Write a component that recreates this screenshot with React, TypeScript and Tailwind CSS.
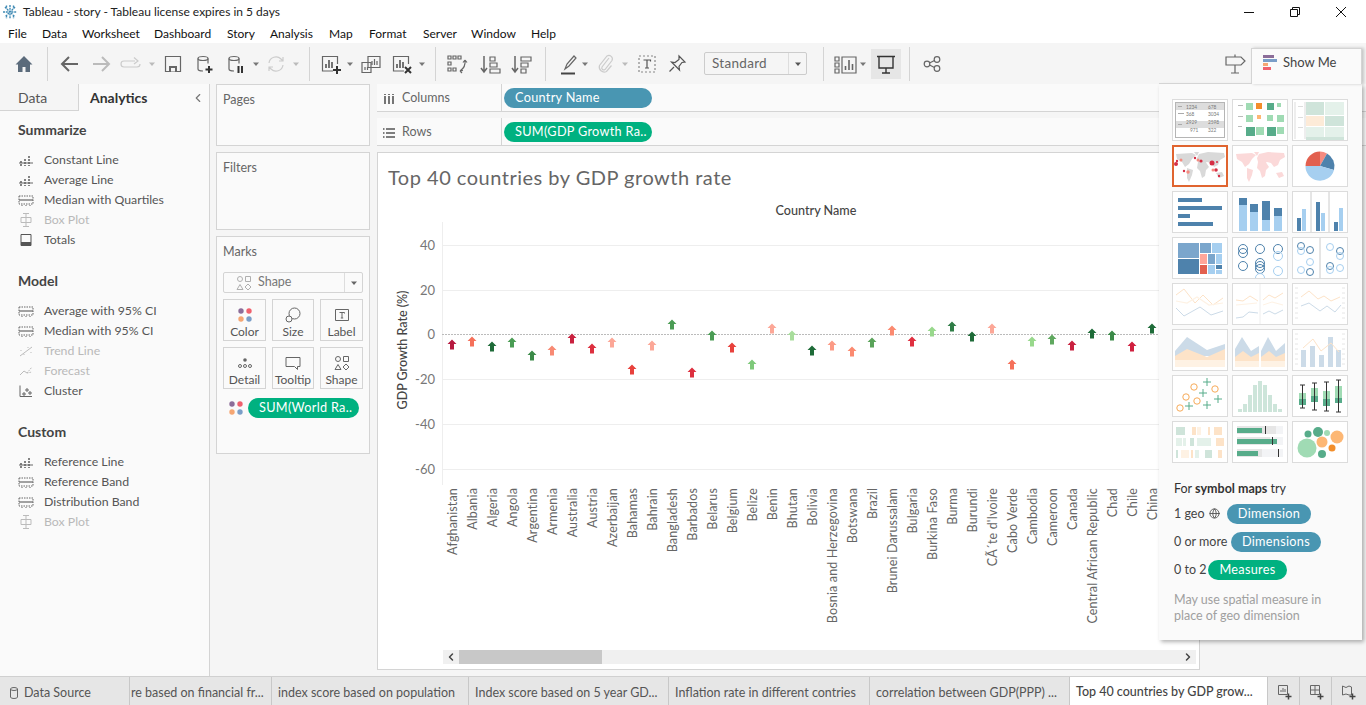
import { Globe, ChevronLeft, ChevronRight } from "lucide-react";
import type { ReactNode } from "react";

const uiFont = "font-['Lato','Noto_Sans',sans-serif]";

const Ico = ({ children, className = "" }: { children: ReactNode; className?: string }) => (
  <svg viewBox="0 0 24 24" fill="none" stroke="#666" strokeWidth="1.2" className={`h-6 w-6 shrink-0 ${className}`}>
    {children}
  </svg>
);

const Caret = ({ className = "", color = "#777" }: { className?: string; color?: string }) => (
  <svg viewBox="0 0 8 8" className={`h-2 w-2 shrink-0 ${className}`}>
    <path d="M1 2.5h6L4 6z" fill={color} />
  </svg>
);

const Sep = ({ className = "" }: { className?: string }) => <div className={`h-[34px] w-px shrink-0 bg-[#d4d4d4] ${className}`} />;

const Cyl = ({ c = "#666" }: { c?: string }) => (
  <>
    <ellipse cx="10" cy="6.5" rx="5" ry="2" stroke={c} />
    <path d="M5 6.500v10.500q0 2 5 2M15 6.500v5" stroke={c} />
  </>
);

const Toolbar = () => (
  <div className="flex h-[41px] items-center bg-[#f5f5f5]">
    <Ico className="ml-[12px]">
      <path d="M12 4 3.500 12.500H6V20h4.500v-5h3v5H18v-7.500h2.500z" fill="#5b6b7b" stroke="none" />
    </Ico>
    <Sep className="ml-[11px]" />
    <Ico className="ml-[10px]">
      <path d="M20 12H5M11 5l-7 7 7 7" stroke="#666" strokeWidth="2" />
    </Ico>
    <Ico className="ml-[7px]">
      <path d="M4 12h15M13 5l7 7-7 7" stroke="#bbb" strokeWidth="2" />
    </Ico>
    <Ico className="ml-[6px]">
      <path d="M16 9H5q-3 0-3 3t3 3h13q3 0 3-3M15 5.500 19 9l-4 3" stroke="#ccc" />
    </Ico>
    <Caret className="ml-[5px]" color="#bbb" />
    <Ico className="ml-[5px]">
      <path d="M4.500 4.500h15v15h-15z" />
      <path d="M8 19.500V14h8v5.500" fill="#666" stroke="none" />
      <path d="M10 16h4v3.500h-4z" fill="#f5f5f5" stroke="none" />
    </Ico>
    <Ico className="ml-[8px]">
      <Cyl />
      <path d="M16 14v7M12.500 17.500h7" stroke="#333" strokeWidth="2" />
    </Ico>
    <Ico className="ml-[7px]">
      <Cyl />
      <path d="M14.500 14v7M18 14v7" stroke="#333" strokeWidth="2" />
    </Ico>
    <Caret className="ml-[4px]" />
    <Ico className="ml-[4px]">
      <path d="M5 11a7 7 0 0 1 12-4l2 2M19 13a7 7 0 0 1-12 4l-2-2M19 5v4h-4M5 19v-4h4" stroke="#ccc" />
    </Ico>
    <Caret className="ml-[4px]" color="#bbb" />
    <Sep className="ml-[9px]" />
    <Ico className="ml-[9px]">
      <path d="M14 19H3.500V4.500h15V12" />
      <path d="M7 16v-4M10 16V8M13 16v-6" strokeWidth="1.800" />
      <path d="M18 14v8M14 18h8" stroke="#333" strokeWidth="2" />
    </Ico>
    <Caret className="ml-[3px]" />
    <Ico className="ml-[5px]">
      <path d="M9 4.500h12v11H9zM3 10.500h9v10H3z" fill="#f5f5f5" />
      <path d="M13 13V9M15.500 13V7M18 13V9M6 18v-3M8.500 18v-3" />
    </Ico>
    <Ico className="ml-[7px]">
      <path d="M14 19H3.500V4.500h15V12" />
      <path d="M7 16v-4M10 16V8M13 16v-6" strokeWidth="1.800" />
      <path d="m15 15 6 6M21 15l-6 6" stroke="#333" strokeWidth="2" />
    </Ico>
    <Caret className="ml-[4px]" />
    <Sep className="ml-[9px]" />
    <Ico className="ml-[9px]">
      <path d="M3 4h3v3H3zM8 4h3v3H8zM13 4h3v3h-3zM3 10h3v3H3zM3 16h3v3H3zM8 16h3v3H8z" />
      <path d="M20 8q1 7-5 11M20 8l-2 2.500M20 8l2 2.500M15 19l3-.5M15 19l2 2" />
    </Ico>
    <Ico className="ml-[9px]">
      <path d="M6 4v15M3 16l3 4 3-4" strokeWidth="1.500" />
      <path d="M12 5h5v4h-5zM12 11h7v4h-7zM12 17h10v4H12z" />
    </Ico>
    <Ico className="ml-[7px]">
      <path d="M6 4v15M3 16l3 4 3-4" strokeWidth="1.500" />
      <path d="M12 5h10v4H12zM12 11h7v4h-7zM12 17h5v4h-5z" />
    </Ico>
    <Sep className="ml-[12px]" />
    <Ico className="ml-[10px]">
      <path d="m9 17 2-5 7-8 2 2-7 8z M9 17l4-3" />
      <path d="M5 21.500h14" stroke="#444" strokeWidth="2" />
    </Ico>
    <Caret className="ml-[1px]" />
    <Ico className="ml-[4px]">
      <path d="m16 6-7 9a2 2 0 0 0 3 2.500l7-9a3.500 3.500 0 0 0-5-4.500l-7.500 9.500a5 5 0 0 0 7 6l5-6" stroke="#ccc" />
    </Ico>
    <Caret className="ml-[4px]" color="#bbb" />
    <Ico className="ml-[6px]">
      <path d="M4 4h16v16H4z" strokeDasharray="2 2" stroke="#888" />
      <path d="M8.500 8h7v1.500M12 8v8M10 16h4" stroke="#555" />
    </Ico>
    <Ico className="ml-[6px]">
      <path d="m14 4 6 6-3 .5-3 4 .5 3.500-8-8 3.500.5 4-3zM9 15l-4.500 4.500" stroke="#555" />
    </Ico>
    <div className={`ml-[15px] flex h-[23px] w-[103px] shrink-0 items-center rounded-[2px] border border-[#ccc] text-[13.5px] tracking-[0.3px] text-[#666] ${uiFont}`}>
      <span className="flex-1 pb-[1px] pl-[7px]">Standard</span>
      <div className="flex h-full w-[18px] items-center justify-center border-l border-[#ddd]">
        <Caret color="#555" />
      </div>
    </div>
    <Sep className="ml-[16px]" />
    <Ico className="ml-[10px]">
      <path d="M1 5h4v4H1zM1 11h4v4H1zM1 17h4v4H1zM8 5h14v16H8z" />
      <path d="M11.500 18v-4M15 18V8M18.500 18v-6" strokeWidth="1.600" />
    </Ico>
    <Caret className="ml-[1px]" />
    <div className="ml-[4px] flex h-[30px] w-[30px] shrink-0 items-center justify-center bg-[#e6e6e6]">
      <Ico>
        <path d="M3 4.500h18M5 5v11h14V5M12 16v5M8 21h8" stroke="#333" strokeWidth="1.400" />
      </Ico>
    </div>
    <Sep className="ml-[8px]" />
    <Ico className="ml-[10px]">
      <circle cx="7" cy="12" r="2.800" />
      <circle cx="17" cy="7.500" r="2.800" />
      <circle cx="17" cy="16.500" r="2.800" />
      <path d="m9.500 11 5-2.500M9.500 13l5 2.500" />
    </Ico>
    <Ico className="ml-[279px]">
      <path d="M3 5h15l4 4-4 4H3zM12 5V2.500M12 13v8M8 21h8" stroke="#666" />
    </Ico>
  </div>
);

const Bars = () => (
  <svg viewBox="0 0 16 16" className="h-4 w-4" stroke="#666" fill="none">
    <path d="M3 9v5M7 7v7M11 4v10" strokeWidth="1.600" strokeDasharray="2 1" />
    <path d="M1 11h14" strokeWidth="1" />
  </svg>
);
const Band = () => (
  <svg viewBox="0 0 16 16" className="h-4 w-4" stroke="#666" fill="none">
    <path d="M1 4h14v8H1z" strokeDasharray="1.500 1" />
    <path d="M1 8h14" strokeWidth="1.200" />
    <path d="M4 13v1M8 13v1M12 13v1" />
  </svg>
);
const BoxPlot = () => (
  <svg viewBox="0 0 16 16" className="h-4 w-4" stroke="#bbb" fill="none">
    <path d="M8 1v14M5 1.500h6M5 14.500h6M3 5.500h10v5H3z" />
  </svg>
);
const Totals = () => (
  <svg viewBox="0 0 16 16" className="h-4 w-4" fill="none">
    <path d="M3 2.500h10v11H3z" stroke="#555" />
    <path d="M3 10h10v4H3z" fill="#555" />
  </svg>
);
const Trend = () => (
  <svg viewBox="0 0 16 16" className="h-4 w-4" stroke="#bbb" fill="none">
    <path d="M2 13 14 4M3 7v1M6 11v1M10 4v1M13 9v1" />
  </svg>
);
const Forecast = () => (
  <svg viewBox="0 0 16 16" className="h-4 w-4" stroke="#bbb" fill="none">
    <path d="M2 12 6 8l3 2" />
    <path d="m9 10 5-6" strokeDasharray="1.500 1" />
    <path d="m9 10 5-1" strokeDasharray="1.500 1" />
  </svg>
);
const Cluster = () => (
  <svg viewBox="0 0 16 16" className="h-4 w-4" stroke="#666" fill="none">
    <path d="M2 2.500v11h12" />
    <path d="M5 10h2v2H5zM8 6h2v2H8zM11 9h2v2h-2z" />
  </svg>
);
const RefLine = () => (
  <svg viewBox="0 0 16 16" className="h-4 w-4" stroke="#666" fill="none">
    <path d="M3 9v5M7 7v7M11 4v10" strokeWidth="1.600" strokeDasharray="2 1" />
    <path d="M1 11h14" />
  </svg>
);

const Row = ({ icon, label, off }: { icon: ReactNode; label: string; off?: boolean }) => (
  <div className={`flex h-5 items-center text-[12.3px] ${off ? "text-[#b9b9b9]" : "text-[#555]"}`}>
    <div className="ml-[18px] flex w-[26px] items-center">{icon}</div>
    <span>{label}</span>
  </div>
);

const LeftPanel = () => (
  <div className={`flex w-[210px] shrink-0 flex-col border-r border-[#d4d4d4] bg-[#fafafa] ${uiFont}`}>
    <div className="flex h-[27px] items-center">
      <div className="flex h-full w-[79px] items-center border-r border-b border-[#d4d4d4] bg-[#f5f5f5] pl-[18px] text-[14px] text-[#555]">Data</div>
      <div className="pl-[11px] text-[14px] font-bold text-[#333]">Analytics</div>
      <ChevronLeft size={14} className="ml-[44px] text-[#777]" />
    </div>
    <div className="mt-[9px] pl-[18px] text-[14px] leading-[20px] font-bold text-[#444]">Summarize</div>
    <div className="mt-[10px]">
      <Row icon={<Bars />} label="Constant Line" />
      <Row icon={<Bars />} label="Average Line" />
      <Row icon={<Band />} label="Median with Quartiles" />
      <Row icon={<BoxPlot />} label="Box Plot" off />
      <Row icon={<Totals />} label="Totals" />
    </div>
    <div className="mt-[21px] pl-[18px] text-[14px] leading-[20px] font-bold text-[#444]">Model</div>
    <div className="mt-[10px]">
      <Row icon={<Band />} label="Average with 95% CI" />
      <Row icon={<Band />} label="Median with 95% CI" />
      <Row icon={<Trend />} label="Trend Line" off />
      <Row icon={<Forecast />} label="Forecast" off />
      <Row icon={<Cluster />} label="Cluster" />
    </div>
    <div className="mt-[21px] pl-[18px] text-[14px] leading-[20px] font-bold text-[#444]">Custom</div>
    <div className="mt-[10px]">
      <Row icon={<RefLine />} label="Reference Line" />
      <Row icon={<Band />} label="Reference Band" />
      <Row icon={<Band />} label="Distribution Band" />
      <Row icon={<BoxPlot />} label="Box Plot" off />
    </div>
  </div>
);

const Dots = () => (
  <svg viewBox="0 0 14 14" className="h-[14px] w-[14px]">
    <circle cx="3" cy="3" r="2.700" fill="#8c6d99" />
    <circle cx="11" cy="3" r="2.700" fill="#f0616e" />
    <circle cx="3" cy="11" r="2.700" fill="#f5a673" />
    <circle cx="11" cy="11" r="2.700" fill="#7a9ec8" />
  </svg>
);

const MarkBtn = ({ icon, label }: { icon: ReactNode; label: string }) => (
  <div className="flex h-[42px] flex-col items-center border border-[#d4d4d4] bg-[#fafafa] pt-[6px] text-[12px] leading-[14px] text-[#555]">
    <div className="flex h-[17px] items-center">{icon}</div>
    <span className="mt-[2px]">{label}</span>
  </div>
);

const ShapesIcon = ({ c = "#666" }: { c?: string }) => (
  <svg viewBox="0 0 16 16" className="h-4 w-4" fill="none" stroke={c}>
    <circle cx="4" cy="4" r="2.500" />
    <path d="M9.500 1.500h5v5h-5zM4 9.500l3 5H1zM12 9l3 3-3 3-3-3z" />
  </svg>
);

const MiddleColumn = () => (
  <div className={`flex w-[167px] shrink-0 flex-col gap-[6px] bg-[#f5f5f5] pr-[7px] pl-[6px] ${uiFont}`}>
    <div className="h-[62px] border border-[#d4d4d4] bg-[#fafafa] pt-[7px] pl-[6px] text-[12.5px] leading-[16px] text-[#666]">Pages</div>
    <div className="h-[78px] border border-[#d4d4d4] bg-[#fafafa] pt-[7px] pl-[6px] text-[12.5px] leading-[16px] text-[#666]">Filters</div>
    <div className="h-[218px] border border-[#d4d4d4] bg-[#fafafa] px-[6px] pt-[7px]">
      <div className="text-[12.5px] leading-[16px] text-[#666]">Marks</div>
      <div className="mt-[12px] flex h-[21px] items-center rounded-[2px] border border-[#d4d4d4] text-[12.5px] text-[#777]">
        <div className="ml-[12px] opacity-50">
          <ShapesIcon />
        </div>
        <span className="ml-[6px] flex-1">Shape</span>
        <div className="flex h-full w-[18px] items-center justify-center border-l border-[#ddd]">
          <Caret color="#666" />
        </div>
      </div>
      <div className="mt-[6px] grid w-[140px] grid-cols-[43px_42px_43px] gap-x-[6px] gap-y-[6px]">
        <MarkBtn icon={<Dots />} label="Color" />
        <MarkBtn
          icon={
            <svg viewBox="0 0 16 16" className="h-4 w-4" fill="none" stroke="#666">
              <circle cx="9.500" cy="6.500" r="5.500" />
              <circle cx="4" cy="12" r="3" fill="#fafafa" />
            </svg>
          }
          label="Size"
        />
        <MarkBtn
          icon={
            <svg viewBox="0 0 16 16" className="h-4 w-4" fill="none" stroke="#666">
              <path d="M1.500 2.500h13v11h-13z" />
              <path d="M5.500 5.500h5v1M8 5.500v5.500M6.800 11h2.400" />
            </svg>
          }
          label="Label"
        />
        <MarkBtn
          icon={
            <svg viewBox="0 0 16 16" className="h-4 w-4" fill="none" stroke="#666">
              <circle cx="8" cy="5" r="1.800" fill="#666" stroke="none" />
              <circle cx="3" cy="11" r="1.500" />
              <circle cx="8" cy="11" r="1.500" />
              <circle cx="13" cy="11" r="1.500" />
            </svg>
          }
          label="Detail"
        />
        <MarkBtn
          icon={
            <svg viewBox="0 0 16 16" className="h-4 w-4" fill="none" stroke="#666">
              <path d="M1 2.500h14v9h-2.500v3l-3-3H1z" />
            </svg>
          }
          label="Tooltip"
        />
        <MarkBtn icon={<ShapesIcon />} label="Shape" />
      </div>
      <div className="mt-[9px] flex items-center">
        <div className="ml-[6px]">
          <Dots />
        </div>
        <div className="ml-[5px] flex h-5 w-[111px] items-center rounded-full bg-[#00b180] pl-[11px] text-[12.7px] tracking-[0.3px] text-white">SUM(World Ra..</div>
      </div>
    </div>
  </div>
);

const Shelf = ({ icon, label, pill, color }: { icon: ReactNode; label: string; pill: string; color: string }) => (
  <div className="flex h-[28px] border-b border-[#d4d4d4] bg-[#fafafa]">
    <div className="flex w-[125px] items-center border-r border-[#d4d4d4] pt-[2px] pl-[6px] text-[12.5px] text-[#666]">
      <div className="w-[19px]">{icon}</div>
      {label}
    </div>
    <div className={`mt-[4px] ml-[2px] flex h-5 w-[148px] items-center rounded-full pl-[11px] text-[12.7px] tracking-[0.3px] text-white ${color}`}>{pill}</div>
  </div>
);

const countries: [string, number, string][] = [
  ["Afghanistan", 345, "#b6193f"],
  ["Albania", 342, "#f5705a"],
  ["Algeria", 347, "#1e6b38"],
  ["Angola", 343, "#4a9c54"],
  ["Argentina", 356, "#3b8a48"],
  ["Armenia", 351, "#f88a74"],
  ["Australia", 339, "#c9213f"],
  ["Austria", 349, "#dd2f3f"],
  ["Azerbaijan", 343, "#fca797"],
  ["Bahamas", 370, "#e8413c"],
  ["Bahrain", 346, "#fca797"],
  ["Bangladesh", 325, "#4a9c54"],
  ["Barbados", 373, "#dd2f3f"],
  ["Belarus", 336, "#4a9c54"],
  ["Belgium", 348, "#e8413c"],
  ["Belize", 365, "#7ec97a"],
  ["Benin", 329, "#fca797"],
  ["Bhutan", 336, "#a8dd9c"],
  ["Bolivia", 351, "#1e6b38"],
  ["Bosnia and Herzegovina", 346, "#fc9a85"],
  ["Botswana", 352, "#fb8a70"],
  ["Brazil", 343, "#5aa35a"],
  ["Brunei Darussalam", 331, "#fb8a70"],
  ["Bulgaria", 342, "#e03040"],
  ["Burkina Faso", 332, "#98d88c"],
  ["Burma", 327, "#2f7d46"],
  ["Burundi", 337, "#1e6b38"],
  ["CÃ´te d'Ivoire", 329, "#fca797"],
  ["Cabo Verde", 365, "#f5705a"],
  ["Cambodia", 342, "#98d88c"],
  ["Cameroon", 340, "#5fa85f"],
  ["Canada", 346, "#c9213f"],
  ["Central African Republic", 334, "#1e6b38"],
  ["Chad", 336, "#3b8a48"],
  ["Chile", 347, "#d0203f"],
  ["China", 329, "#1e6b38"],
];

const ticks: [string, number][] = [
  ["40", 245],
  ["20", 290],
  ["0", 334],
  ["-20", 379],
  ["-40", 424],
  ["-60", 469],
];

const Chart = () => (
  <svg viewBox="378 193 820 452" className="block h-[452px] w-[820px] font-['Lato',sans-serif]">
    <text x="816" y="215" textAnchor="middle" fontSize="12.600" fontWeight="500" fill="#444">
      Country Name
    </text>
    <text transform="translate(407 350) rotate(-90)" textAnchor="middle" fontSize="12.500" fontWeight="500" fill="#444">
      GDP Growth Rate (%)
    </text>
    <path d="M442.500 222v263" stroke="#eee" />
    {ticks.map(([t, y]) => (
      <g key={t}>
        <text x="435" y={y + 5} textAnchor="end" fontSize="13" fill="#777">
          {t}
        </text>
        {t === "0" ? (
          <path d={`M442 ${y + 0.5}H1198`} stroke="#bbb" strokeDasharray="2 1" />
        ) : (
          <path d={`M442 ${y + 0.5}H1198`} stroke="#eee" />
        )}
      </g>
    ))}
    {countries.map(([name, y, color], i) => {
      const x = 452 + i * 20;
      return (
        <g key={name}>
          <path d={`M${x} ${y - 5.500}l4.500 4.500h-2.500v5.500h-4v-5.500h-2.500z`} fill={color} />
          <text transform={`translate(${x + 4.500} 488) rotate(-90)`} textAnchor="end" fontSize="12.500" letterSpacing="0.15" fill="#666">
            {name}
          </text>
        </g>
      );
    })}
  </svg>
);

const ViewCard = () => (
  <div className={`h-[518px] w-[823px] border border-[#d4d4d4] bg-white ${uiFont}`}>
    <div className="mt-[12px] pl-[10px] text-[20px] leading-[24px] tracking-[0.5px] text-[#666]">Top 40 countries by GDP growth rate</div>
    <div className="mt-[4px]">
      <Chart />
    </div>
    <div className="mt-[5px] ml-[65px] flex h-[14px] w-[753px] items-center bg-[#f0f0f0]">
      <ChevronLeft size={12} strokeWidth={3} className="w-[16px] text-[#444]" />
      <div className="h-full w-[143px] bg-[#c8c8c8]" />
      <div className="flex-1" />
      <ChevronRight size={12} strokeWidth={3} className="mr-[2px] text-[#444]" />
    </div>
  </div>
);

/* ---------- Show Me thumbnails, all on a 56x42 grid ---------- */

const Thumb = ({ children, active }: { children?: ReactNode; active?: boolean }) => (
  <div className={`h-[42px] w-[56px] bg-white ${active ? "border-2 border-[#e0642f]" : "border border-[#dcdcdc]"}`}>
    <svg viewBox={active ? "2 2 52 38" : "1 1 54 40"} className="block h-full w-full">
      {children}
    </svg>
  </div>
);

const R = ({ b, f }: { b: number[]; f: string }) => <rect x={b[0]} y={b[1]} width={b[2]} height={b[3]} fill={f} />;

const World = ({ f }: { f: string }) => (
  <g fill={f}>
    <path d="M4 9 20 8l4 2-4 4-3 5-4 3-3-5-5-3z" />
    <path d="m22 7 5 0-2 4z" />
    <path d="m15 23 6 2-1 5-3 7-2-4z" />
    <path d="m27 9 9-2 16 1 1 4-5 3-2 5-4 2-3-4-4-1-2 1-7-1-1-4z" />
    <path d="m26 17 7-1 4 6-3 3-1 6-3 2-2-7-3-3z" />
    <path d="m44 28 6-1 2 4-5 2z" />
  </g>
);

const Ring = ({ p, c, r = 4.500 }: { p: number[]; c: string; r?: number }) => (
  <circle cx={p[0]} cy={p[1]} r={r} fill="none" stroke={c} strokeWidth="1" />
);

const tableText = [
  ["1234", 14, 8],
  ["678", 36, 8],
  ["368", 14, 15],
  ["3034", 36, 15],
  ["2929", 14, 23],
  ["2598", 36, 23],
  ["971", 18, 31],
  ["322", 36, 31],
] as const;

const Thumbs = () => {
  const blue = "#4e82ac";
  const sky = "#a6cff0";
  const lb = "#ccdbe8";
  const lo = "#fde3c8";
  const loo = "#fef2e4";
  const g = "#57ac8a";
  const lg = "#a0dbb4";
  return (
    <div className="grid grid-cols-[56px_56px_56px] gap-[4px]">
      <Thumb>
        <rect x="3.500" y="3.500" width="49" height="35" fill="none" stroke="#b5b5b5" />
        <R b={[4, 4, 48, 7]} f="#ddd" />
        <R b={[4, 22, 48, 7]} f="#ddd" />
        <R b={[6, 7, 4, 1]} f="#aaa" />
        <R b={[6, 14, 6, 1]} f="#aaa" />
        <R b={[6, 25, 4, 1]} f="#aaa" />
        {tableText.map(([t, x, y]) => (
          <text key={t} x={x} y={y + 1.500} fontSize="4.800" fill="#777">
            {t}
          </text>
        ))}
      </Thumb>
      <Thumb>
        <R b={[6, 6, 5, 1]} f="#bbb" />
        <R b={[6, 17, 5, 1]} f="#bbb" />
        <R b={[6, 27, 4, 1]} f="#bbb" />
        <R b={[14, 4, 7, 7]} f={lg} />
        <R b={[24, 4, 6, 6]} f="#f28e2b" />
        <R b={[35, 4, 7, 7]} f={g} />
        <R b={[45, 4, 4, 4]} f={lg} />
        <R b={[14, 16, 7, 7]} f={lg} />
        <R b={[25, 16, 4, 4]} f="#fdb774" />
        <R b={[35, 16, 6, 6]} f={lg} />
        <R b={[45, 16, 7, 7]} f={lg} />
        <R b={[14, 28, 9, 9]} f={g} />
        <R b={[24, 28, 8, 8]} f={lg} />
        <R b={[35, 28, 9, 9]} f={g} />
        <R b={[45, 28, 7, 7]} f={lg} />
      </Thumb>
      <Thumb>
        <R b={[14, 3, 18, 13]} f="#cfe4da" />
        <R b={[33, 3, 19, 13]} f="#e4f1ea" />
        <R b={[14, 17, 18, 10]} f="#fdebd8" />
        <R b={[33, 17, 19, 10]} f="#cfe4da" />
        <R b={[14, 28, 18, 10]} f="#e4f1ea" />
        <R b={[33, 28, 19, 10]} f="#e4f1ea" />
        <R b={[14, 38, 38, 3]} f="#cfe4da" />
        <R b={[6, 7, 5, 1]} f="#ddd" />
        <R b={[6, 18, 5, 1]} f="#ddd" />
        <R b={[6, 28, 5, 1]} f="#ddd" />
        <path d="M13 3v37M3 3v37" stroke="#ddd" fill="none" />
      </Thumb>
      <Thumb active>
        <World f="#d9d9d9" />
        <g fill="#d62f45">
          <circle cx="4" cy="19" r="2" />
          <circle cx="5" cy="16" r="1.200" />
          <circle cx="29" cy="16" r="1.600" />
          <circle cx="40" cy="18" r="2.500" />
          <circle cx="12" cy="26" r="1.200" />
          <circle cx="44" cy="25" r="1.800" />
          <circle cx="47" cy="31" r="1.200" />
          <circle cx="23" cy="13" r="1.200" />
          <circle cx="45" cy="17" r="1" />
        </g>
        <g fill="#f58b80">
          <circle cx="9" cy="15" r="1.500" />
          <circle cx="26" cy="15" r="1.500" />
          <circle cx="16" cy="27" r="1.700" />
          <circle cx="41" cy="25" r="1.500" />
        </g>
      </Thumb>
      <Thumb>
        <World f="#fbd9d9" />
      </Thumb>
      <Thumb>
        <path d="M28 21V6.500A14.500 14.500 0 0 1 35 8.500z" fill="#f58b80" />
        <path d="M28 21 35 8.500A14.500 14.500 0 0 1 42 25z" fill={blue} />
        <path d="M28 21 42 25A14.500 14.500 0 0 1 13.500 21z" fill={sky} />
        <path d="M28 21H13.500A14.500 14.500 0 0 1 28 6.500z" fill="#e2604f" />
      </Thumb>
      <Thumb>
        <R b={[6, 7, 24, 4]} f={blue} />
        <R b={[6, 15, 44, 4]} f={blue} />
        <R b={[6, 23, 12, 4]} f={blue} />
        <R b={[6, 31, 35, 4]} f={blue} />
      </Thumb>
      <Thumb>
        <R b={[7, 7, 8, 7]} f={blue} />
        <R b={[7, 14, 8, 26]} f={sky} />
        <R b={[18, 13, 8, 8]} f={blue} />
        <R b={[18, 21, 8, 19]} f={sky} />
        <R b={[30, 10, 8, 19]} f={blue} />
        <R b={[30, 29, 8, 11]} f={sky} />
        <R b={[42, 17, 8, 8]} f={blue} />
        <R b={[42, 25, 8, 15]} f={sky} />
      </Thumb>
      <Thumb>
        <path d="M19 1v40M37 1v40" stroke="#ccc" />
        <R b={[5, 27, 4, 13]} f={blue} />
        <R b={[10, 18, 4, 22]} f={sky} />
        <R b={[24, 11, 4, 29]} f={blue} />
        <R b={[29, 22, 4, 18]} f={sky} />
        <R b={[42, 31, 4, 9]} f={blue} />
        <R b={[47, 17, 4, 23]} f={sky} />
      </Thumb>
      <Thumb>
        <R b={[6, 6, 21, 15]} f="#7ba6cc" />
        <R b={[6, 22, 21, 15]} f={blue} />
        <R b={[28, 6, 11, 10]} f="#7ba6cc" />
        <R b={[40, 6, 10, 10]} f={sky} />
        <R b={[28, 17, 7, 10]} f="#ffa69a" />
        <R b={[28, 28, 7, 9]} f="#e2604f" />
        <R b={[36, 17, 7, 10]} f="#7ba6cc" />
        <R b={[44, 17, 6, 10]} f={sky} />
        <R b={[36, 28, 7, 9]} f={sky} />
        <R b={[44, 28, 6, 4]} f={blue} />
        <R b={[44, 33, 6, 4]} f={sky} />
      </Thumb>
      <Thumb>
        {[[11, 12], [11, 16], [28, 12], [46, 12], [11, 29], [28, 26], [28, 29], [28, 32]].map((p) => (
          <Ring key={p.join()} p={p} c={blue} />
        ))}
        {[[46, 19], [46, 34], [28, 41]].map((p) => (
          <Ring key={p.join()} p={p} c={sky} />
        ))}
      </Thumb>
      <Thumb>
        <path d="M28 1v40" stroke="#ccc" />
        {[[9, 9], [18, 13], [18, 35], [48, 14], [38, 29]].map((p) => (
          <Ring key={p.join()} p={p} c={blue} r={3.500} />
        ))}
        {[[9, 14], [38, 10], [48, 19], [18, 25], [9, 33], [38, 33], [48, 31]].map((p) => (
          <Ring key={p.join()} p={p} c={sky} r={3.500} />
        ))}
      </Thumb>
      <Thumb>
        <g fill="none" strokeWidth="1">
          <path d="M4 12 12 6l11 14 8-8 10 10 10-7" stroke={lo} />
          <path d="m4 18 11 2 10-6 12 8 14-2" stroke={loo} strokeWidth="1.200" />
          <path d="m4 25 8 8 16-9 11 8 12-4" stroke={lb} />
        </g>
      </Thumb>
      <Thumb>
        <path d="M28 1v40" stroke="#eee" />
        <g fill="none">
          <path d="m4 17 7 1 7-5 8 5M31 17l6-5 6 3 8-5" stroke={lo} />
          <path d="m4 22 11-1 10-1M31 22l9-3 11 3" stroke={loo} />
          <path d="m4 35 7-1 6-5 9 1M31 31l6-3 6 3 8-4" stroke={lb} />
        </g>
      </Thumb>
      <Thumb>
        <path d="M3 5h3M3 10h3M3 15h3M3 20h3M3 25h3M3 30h3M3 35h3M50 5h3M50 10h3M50 15h3M50 20h3M50 25h3M50 30h3M50 35h3" stroke="#e6e6e6" />
        <path d="m9 14 8-6 9 8 6-3 7 5 9-4" fill="none" stroke={lo} />
        <path d="m9 23 8-3 11 8 7-5 8 6 6-7" fill="none" stroke={lb} />
      </Thumb>
      <Thumb>
        <path d="M3 22 15 8l20 13 18-6v12H3z" fill={lb} />
        <path d="m3 27 12-7 20 8 18-8v18H3z" fill={lo} />
        <path d="M3 31h50v7H3z" fill={loo} />
      </Thumb>
      <Thumb>
        <path d="m3 20 7-12 9 14 8-5v21H3zM29 22l7-14 8 14 9-8v24H29z" fill={lb} />
        <path d="m3 28 8-6 8 6 8-4v14H3zM29 28l8-6 7 6 9-4v14H29z" fill={lo} />
        <path d="M3 32h24v6H3zM29 32h24v6H29z" fill={loo} />
      </Thumb>
      <Thumb>
        <path d="M3 5h3M3 10h3M3 15h3M3 20h3M3 25h3M3 30h3M3 35h3M50 5h3M50 10h3M50 15h3M50 20h3M50 25h3M50 30h3M50 35h3" stroke="#e6e6e6" />
        <R b={[9, 21, 5, 17]} f={lb} />
        <R b={[18, 17, 5, 21]} f={lb} />
        <R b={[27, 26, 5, 12]} f={lb} />
        <R b={[36, 8, 5, 30]} f={lb} />
        <R b={[44, 21, 5, 17]} f={lb} />
        <path d="m11 19 10-9 8 12 10-8 8 9" fill="none" stroke={lo} />
      </Thumb>
      <Thumb>
        {[[22, 12], [14, 22], [8, 33], [25, 26], [43, 14]].map((p) => (
          <Ring key={p.join()} p={p} c="#f7ab59" r={3.200} />
        ))}
        <path d="M35 3v8M31 7h8M31 14v8M27 18h8M46 20v8M42 24h8M35 26v8M31 30h8M17 27v8M13 31h8" stroke={g} fill="none" />
      </Thumb>
      <Thumb>
        {[3, 8, 17, 27, 31, 27, 17, 8, 3].map((h, i) => (
          <rect key={i} x={6 + i * 5} y={37 - h} width="4" height={h} fill="#cde5da" />
        ))}
      </Thumb>
      <Thumb>
        <R b={[7, 18, 7, 6]} f={lg} />
        <R b={[7, 24, 7, 6]} f={g} />
        <R b={[19, 13, 7, 8]} f={lg} />
        <R b={[19, 21, 7, 6]} f={g} />
        <R b={[31, 16, 7, 8]} f={lg} />
        <R b={[31, 24, 7, 7]} f={g} />
        <R b={[43, 11, 7, 12]} f={lg} />
        <R b={[43, 23, 7, 5]} f={g} />
        <path d="M10.500 10v23M8 10h5M8 33h5M22.500 8v27M20 8h5M20 35h5M34.500 7v29M32 7h5M32 36h5M46.500 5v32M44 5h5M44 37h5" stroke="#333" fill="none" />
      </Thumb>
      <Thumb>
        <R b={[4, 6, 9, 8]} f="#cfe4da" />
        <R b={[20, 6, 4, 8]} f={lo} />
        <R b={[25, 6, 4, 8]} f={loo} />
        <R b={[36, 6, 2, 8]} f={lo} />
        <R b={[42, 6, 8, 8]} f={lo} />
        <R b={[4, 17, 6, 8]} f="#e4f1ea" />
        <R b={[11, 17, 3, 8]} f="#e4f1ea" />
        <R b={[18, 17, 4, 8]} f="#cfe4da" />
        <R b={[25, 17, 14, 8]} f="#e4f1ea" />
        <R b={[44, 17, 8, 8]} f={lo} />
        <R b={[4, 29, 2, 8]} f="#cfe4da" />
        <R b={[9, 29, 8, 8]} f={loo} />
        <R b={[19, 29, 2, 8]} f={lo} />
        <R b={[23, 29, 4, 8]} f="#e4f1ea" />
        <R b={[33, 29, 7, 8]} f="#cfe4da" />
        <R b={[46, 29, 4, 8]} f={lo} />
      </Thumb>
      <Thumb>
        {[7, 18, 30].map((y, i) => (
          <g key={y}>
            <R b={[5, y - 2, 46, 8]} f="#f3f4f6" />
            <R b={[5, y - 2, [39, 33, 25][i], 8]} f="#e6e6e6" />
            <R b={[5, y, [25, 40, 21][i], 5]} f={g} />
            <R b={[[33, 40, 46][i], y - 2, 1, 8]} f="#333" />
          </g>
        ))}
      </Thumb>
      <Thumb>
        <circle cx="15" cy="27" r="9.500" fill={lg} />
        <circle cx="16" cy="13" r="3.500" fill={g} />
        <circle cx="26" cy="11" r="5" fill={g} />
        <circle cx="35" cy="12" r="3" fill={lg} />
        <circle cx="45" cy="16" r="6.500" fill="#fdb774" />
        <circle cx="30" cy="21" r="5.500" fill="#fdb774" />
        <circle cx="40" cy="27" r="3.500" fill="#f28e2b" />
        <circle cx="30" cy="33" r="4" fill={g} />
      </Thumb>
    </div>
  );
};

const HintPill = ({ label, color, w }: { label: string; color: string; w: string }) => (
  <div className={`flex h-5 items-center justify-center rounded-full text-[12.7px] tracking-[0.3px] text-white ${color} ${w}`}>{label}</div>
);

const ShowMe = () => (
  <div className={`absolute top-[48px] right-[4px] w-[203px] ${uiFont}`}>
    <div className="flex h-[36px]">
      <div className="mt-auto h-px w-[92px] bg-[#d4d4d4]" />
      <div className="flex flex-1 items-center border-t border-r border-l border-[#d4d4d4] bg-[#fafafa] pb-[8px] pl-[11px] text-[13px] text-[#444] shadow-[2px_0_3px_rgba(0,0,0,0.2)]">
        <svg viewBox="0 0 15 16" className="mr-[5px] h-4 w-[15px]">
          <rect width="11" height="3" fill="#8c6d99" />
          <rect y="4" width="14" height="3" fill="#7a9ec8" />
          <rect y="8" width="5" height="3" fill="#f5a673" />
          <rect y="12" width="8" height="3" fill="#f0616e" />
        </svg>
        Show Me
      </div>
    </div>
    <div className="h-[556px] bg-[#fafafa] pt-[15px] pl-[13px] shadow-[2px_2px_4px_rgba(0,0,0,0.3)]">
      <Thumbs />
      <div className="mt-[17px] ml-[2px] text-[12.5px] leading-[18px] text-[#333]">
        For <b>symbol maps</b> try
      </div>
      <div className="mt-[6px] ml-[2px] flex h-5 items-center text-[12.5px] text-[#444]">
        <span className="w-[35px]">1 geo</span>
        <Globe size={11} className="mr-[7px] mb-[2px] text-[#555]" />
        <HintPill label="Dimension" color="bg-[#4996b2]" w="w-[84px]" />
      </div>
      <div className="mt-[8px] ml-[2px] flex h-5 items-center text-[12.5px] text-[#444]">
        <span className="w-[57px]">0 or more</span>
        <HintPill label="Dimensions" color="bg-[#4996b2]" w="w-[90px]" />
      </div>
      <div className="mt-[8px] ml-[2px] flex h-5 items-center text-[12.5px] text-[#444]">
        <span className="w-[34px]">0 to 2</span>
        <HintPill label="Measures" color="bg-[#00b180]" w="w-[79px]" />
      </div>
      <div className="mt-[12px] ml-[2px] text-[12.5px] leading-[16px] text-[#a0a0a0]">
        May use spatial measure in
        <br />
        place of geo dimension
      </div>
    </div>
  </div>
);

const SheetTab = ({ label, w }: { label: string; w: string }) => (
  <div className={`flex h-full items-center border-r border-[#c8c8c8] pt-[4px] pl-[6px] whitespace-nowrap ${w}`}>{label}</div>
);

const BottomTabs = () => (
  <div className={`flex h-[29px] items-center border-t border-[#d0d0d0] bg-[#e6e6e6] text-[12.5px] text-[#555] ${uiFont}`}>
    <div className="flex h-full w-[130px] shrink-0 items-center border-r border-[#c8c8c8] pt-[4px]">
      <svg viewBox="0 0 12 14" className="ml-[8px] h-[14px] w-[12px]" fill="none" stroke="#666">
        <ellipse cx="6" cy="3" rx="3.500" ry="1.500" />
        <path d="M2.500 3v8q0 1.500 3.500 1.500T9.500 11V3" />
      </svg>
      <span className="ml-[4px]">Data Source</span>
    </div>
    <div className="flex h-full w-[142px] shrink-0 items-center border-r border-[#c8c8c8] pt-[4px] pl-[1px] whitespace-nowrap">re based on financial fr...</div>
    <SheetTab label="index score based on population" w="w-[197px]" />
    <SheetTab label="Index score based on 5 year GD..." w="w-[200px]" />
    <SheetTab label="Inflation rate in different contries" w="w-[201px]" />
    <SheetTab label="correlation between GDP(PPP) ..." w="w-[200px]" />
    <div className="flex h-full w-[198px] items-center border-r border-[#c8c8c8] bg-white pt-[2px] pl-[6px] font-medium whitespace-nowrap text-[#444]">Top 40 countries by GDP grow...</div>
    {[0, 1, 2].map((i) => (
      <div key={i} className="flex h-full w-[32px] items-center justify-center border-r border-[#c8c8c8] pt-[2px] last:border-r-0">
        <svg viewBox="0 0 16 16" className="h-4 w-4" fill="none" stroke="#666">
          {i === 0 && <path d="M2.500 1.500h9v9h-9zM5 8V6M7 8V4M9 8V5" />}
          {i === 1 && <path d="M2.500 1.500h9v9h-9zM7 1.500v9M2.500 6h9" />}
          {i === 2 && <path d="M2.500 2 6 3.500 9 2l2.500 1v8H9L6 10l-3.500 1z" />}
          <path d="M12.500 9.500v6M9.500 12.500h6" stroke="#444" strokeWidth="1.500" />
        </svg>
      </div>
    ))}
  </div>
);

export default function App() {
  return (
    <div className="relative flex h-[705px] w-[1366px] flex-col overflow-hidden bg-white font-['Lato','Noto_Sans',sans-serif]">
      {/* Window title */}
      <div className="flex h-[24px] items-center text-[12px] text-[#222]">
        <svg viewBox="0 0 16 16" className="ml-[2px] h-4 w-4" stroke="#3f8ab4" strokeWidth="1.400">
          <path d="M8 1v14M1 8h14M3 3l10 10M13 3 3 13M4.500 1.500v3M11.500 1.500v3M4.500 11.500v3M11.500 11.500v3" strokeDasharray="2 .8" />
        </svg>
        <span className="ml-[5px]">Tableau - story - Tableau license expires in 5 days</span>
        <div className="ml-auto flex items-center">
          <svg viewBox="0 0 12 12" className="h-3 w-3" stroke="#111" fill="none">
            <path d="M1 6.500h10" />
          </svg>
          <svg viewBox="0 0 12 12" className="ml-[34px] h-3 w-3" stroke="#111" fill="none">
            <path d="M1.500 3.500h7v7h-7zM3.500 3.500v-2h7v7h-2" />
          </svg>
          <svg viewBox="0 0 12 12" className="mr-[19px] ml-[34px] h-3 w-3" stroke="#111" fill="none">
            <path d="m1 1 10 10M11 1 1 11" />
          </svg>
        </div>
      </div>
      {/* Menu bar */}
      <div className="flex h-[19px] items-center pl-[8px] text-[12px] text-[#111]">
        <span className="w-[34px]">File</span>
        <span className="w-[40px]">Data</span>
        <span className="w-[72px]">Worksheet</span>
        <span className="w-[73px]">Dashboard</span>
        <span className="w-[43px]">Story</span>
        <span className="w-[59px]">Analysis</span>
        <span className="w-[40px]">Map</span>
        <span className="w-[54px]">Format</span>
        <span className="w-[48px]">Server</span>
        <span className="w-[60px]">Window</span>
        <span>Help</span>
      </div>
      <Toolbar />
      <div className="flex h-[592px] bg-[#f5f5f5]">
        <LeftPanel />
        <MiddleColumn />
        <div className={`flex-1 ${uiFont}`}>
          <Shelf
            icon={
              <svg viewBox="0 0 12 12" className="h-3 w-3" stroke="#555" strokeWidth="1.600">
                <path d="M2 3v8M6 3v8M10 3v8" />
                <path d="M2 1v1M6 1v1M10 1v1" />
              </svg>
            }
            label="Columns"
            pill="Country Name"
            color="bg-[#4996b2]"
          />
          <div className="h-[6px]" />
          <Shelf
            icon={
              <svg viewBox="0 0 12 12" className="h-3 w-3" stroke="#555" strokeWidth="1.600">
                <path d="M3 2h9M3 6h9M3 10h9M0 2h1.500M0 6h1.500M0 10h1.500" />
              </svg>
            }
            label="Rows"
            pill="SUM(GDP Growth Ra.."
            color="bg-[#00b180]"
          />
          <div className="h-[6px]" />
          <ViewCard />
        </div>
      </div>
      <BottomTabs />
      <ShowMe />
    </div>
  );
}
